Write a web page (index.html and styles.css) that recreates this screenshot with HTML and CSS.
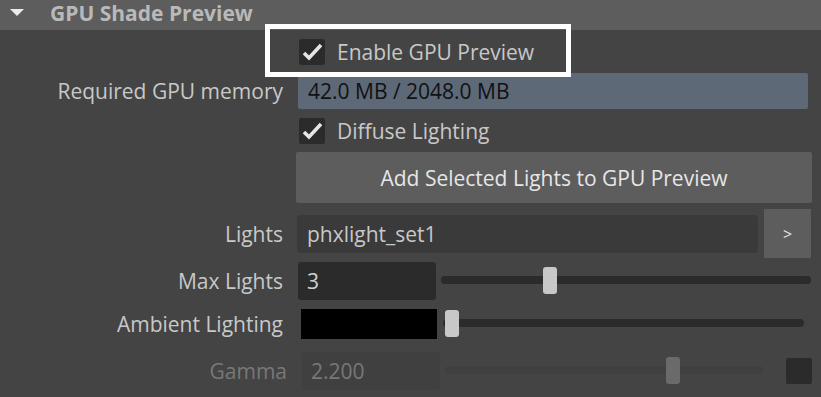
FILE: index.html
```html
<!DOCTYPE html>
<html lang="en">
<head>
  <meta charset="UTF-8">
  <title>GPU Shade Preview</title>
  <link rel="stylesheet" href="styles.css">
</head>
<body>

  <div class="panel">
    <div class="frame-header">
      <span class="caret"></span>
      <span class="frame-title">GPU Shade Preview</span>
    </div>

    <div class="frame-body">
      <div class="row row-check">
        <div class="label"></div>
        <label class="check">
          <span class="box">
            <svg width="26" height="26" viewBox="0 0 26 26"><polyline points="5,14 10,19 22,6" fill="none" stroke="#e6e6e6" stroke-width="3.6"/></svg>
          </span>
          Enable GPU Preview
        </label>
      </div>

      <div class="row row-memory">
        <div class="label">Required GPU memory</div>
        <div class="field field-info">42.0 MB / 2048.0 MB</div>
      </div>

      <div class="row row-check">
        <div class="label"></div>
        <label class="check">
          <span class="box">
            <svg width="26" height="26" viewBox="0 0 26 26"><polyline points="5,14 10,19 22,6" fill="none" stroke="#e6e6e6" stroke-width="3.6"/></svg>
          </span>
          Diffuse Lighting
        </label>
      </div>

      <div class="row row-button">
        <div class="label"></div>
        <button class="wide-btn">Add Selected Lights to GPU Preview</button>
      </div>

      <div class="row row-lights">
        <div class="label">Lights</div>
        <div class="field field-lights">phxlight_set1</div>
        <button class="arrow-btn">&gt;</button>
      </div>

      <div class="row row-slider">
        <div class="label">Max Lights</div>
        <div class="field field-num">3</div>
        <div class="slider slider-max">
          <div class="track"></div>
          <div class="handle" style="left:102px"></div>
        </div>
      </div>

      <div class="row row-ambient">
        <div class="label">Ambient Lighting</div>
        <div class="swatch"></div>
        <div class="slider slider-ambient">
          <div class="track"></div>
          <div class="handle" style="left:2px"></div>
        </div>
      </div>

      <div class="row row-slider disabled">
        <div class="label">Gamma</div>
        <div class="field field-num field-gamma">2.200</div>
        <div class="slider slider-gamma">
          <div class="track"></div>
          <div class="handle" style="left:221px"></div>
        </div>
        <div class="map-btn"></div>
      </div>
    </div>

    <!-- callout box around the enable checkbox -->
    <div class="highlight"></div>
  </div>

</body>
</html>
```

FILE: styles.css
```css
* { box-sizing: border-box; margin: 0; padding: 0; }

body {
  background: #444444;
  font-family: "Open Sans", "Noto Sans", sans-serif;
  font-size: 21px;
  color: #c8c8c8;
  overflow: hidden;
}

.panel {
  position: relative;
  width: 821px;
  height: 397px;
}

.frame-header {
  height: 30px;
  background: #5d5d5d;
  display: flex;
  align-items: center;
}

.caret {
  width: 0;
  height: 0;
  margin-left: 10px;
  margin-right: 26px;
  border-left: 7px solid transparent;
  border-right: 7px solid transparent;
  border-top: 7px solid #ececec;
  margin-top: -6px;
}

.frame-title {
  font-weight: bold;
  font-size: 21px;
  color: #b9b9b9;
  margin-top: -5px;
}

.row {
  display: flex;
  align-items: center;
}

.label {
  width: 283px;
  flex-shrink: 0;
  text-align: right;
  white-space: nowrap;
}

.row-check { height: 43px; }

.check {
  display: flex;
  align-items: center;
  gap: 12px;
  margin-left: 16px;
}

.check .box {
  width: 26px;
  height: 26px;
  background: #2b2b2b;
  border-radius: 2px;
  display: flex;
}

.field {
  height: 38px;
  border-radius: 3px;
  display: flex;
  align-items: center;
  padding-left: 10px;
}

.row-memory { height: 36px; }

.field-info {
  height: 36px;
  width: 510px;
  margin-left: 15px;
  background: #5d6977;
  color: #111;
  border-radius: 2px;
}

.row-button { height: 51px; }

.wide-btn {
  margin-left: 13px;
  width: 516px;
  height: 51px;
  background: #5d5d5d;
  border: none;
  border-radius: 2px;
  color: #e6e6e6;
  font-family: inherit;
  font-size: 21px;
}

.row-lights {
  height: 49px;
  margin-top: 6px;
}

.field-lights {
  margin-left: 14px;
  width: 461px;
  background: #3a3a3a;
}

.arrow-btn {
  margin-left: 6px;
  width: 47px;
  height: 49px;
  background: #5d5d5d;
  border: none;
  color: #e6e6e6;
  font-family: inherit;
  font-size: 16px;
}

.row-slider { height: 38px; margin-top: 4px; }

.field-num {
  margin-left: 15px;
  width: 138px;
  background: #2b2b2b;
  color: #d0d0d0;
  padding-left: 9px;
}

.slider {
  position: relative;
  height: 38px;
}

.slider .track {
  position: absolute;
  left: 0;
  right: 0;
  top: 14px;
  height: 8px;
  border-radius: 4px;
  background: #2b2b2b;
}

.slider .handle {
  position: absolute;
  top: 5px;
  width: 14px;
  height: 27px;
  border-radius: 3px;
  background: #c8c8c8;
}

.slider-max {
  margin-left: 5px;
  width: 370px;
}

.row-ambient { height: 40px; margin-top: 4px; }

.swatch {
  margin-left: 18px;
  width: 136px;
  height: 30px;
  background: #000;
}

.slider-ambient {
  margin-left: 6px;
  width: 361px;
  height: 40px;
}

.slider-ambient .track { top: 15px; }
.slider-ambient .handle { top: 6px; }

.disabled { margin-top: 8px; }

.disabled .label { color: #787878; width: 287px; }

.field-gamma {
  margin-left: 15px;
  background: #404040;
  color: #787878;
}

.slider-gamma {
  margin-left: 5px;
  width: 318px;
}

.slider-gamma .track { background: #404040; }
.slider-gamma .handle { background: #6a6a6a; }

.map-btn {
  margin-left: 23px;
  width: 26px;
  height: 26px;
  border-radius: 2px;
  background: #2b2b2b;
}

.highlight {
  position: absolute;
  left: 265px;
  top: 24px;
  width: 306px;
  height: 53px;
  border: 5px solid #ffffff;
}
```
